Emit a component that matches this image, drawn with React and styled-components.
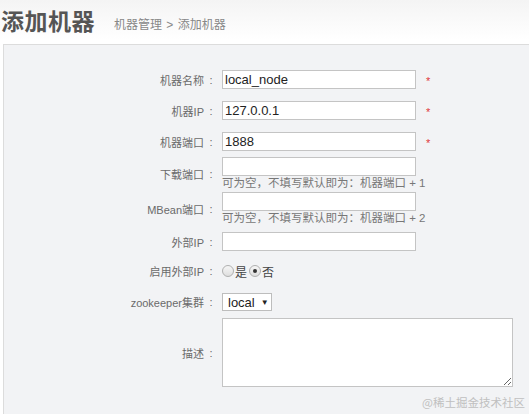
import React from "react";
import styled, { createGlobalStyle } from "styled-components";

const Global = createGlobalStyle`
  html, body { margin: 0; padding: 0; }
  body {
    background: linear-gradient(#f4f4f4 0px, #ffffff 40px);
    font-family: "Liberation Sans", Arial, "Noto Sans CJK SC", sans-serif;
    overflow: hidden;
    text-spacing-trim: space-all;
  }
`;

const Page = styled.div`
  position: relative;
  width: 529px;
  height: 414px;
  overflow: hidden;
`;

const Header = styled.div`
  display: flex;
  align-items: flex-end;
  height: 44px;
  padding-left: 1px;
  padding-bottom: 9px;
  box-sizing: border-box;
`;

const Title = styled.h1`
  margin: 0;
  font-size: 23px;
  line-height: 30px;
  font-weight: bold;
  color: #555;
  font-family: "Noto Sans CJK SC", sans-serif;
  letter-spacing: 0.5px;
`;

const Crumb = styled.span`
  margin-left: 19px;
  margin-bottom: 2px;
  font-size: 12px;
  line-height: 16px;
  color: #888;
  font-family: "Liberation Sans", Arial, "Noto Sans CJK SC", sans-serif;
  word-spacing: 1px;
`;

const Panel = styled.div`
  margin-left: 3px;
  border: 1px solid #dcdcdc;
  border-right: none;
  background: #f2f3f5;
  height: 400px;
  padding-top: 24px;
  box-sizing: border-box;
`;

const Row = styled.div`
  display: flex;
  align-items: center;
  margin-top: ${(p) => p.$gap || 0}px;
`;

const Label = styled.div`
  width: 212px;
  flex: none;
  display: flex;
  justify-content: flex-end;
  align-items: center;
  font-size: 11px;
  color: #6a6a6a;
  font-family: "Liberation Sans", Arial, "Noto Sans CJK SC", sans-serif;
`;

const Colon = styled.span`
  display: inline-block;
  width: 10px;
  margin-left: 2px;
  text-align: center;
`;

const Field = styled.div`
  display: flex;
  flex-direction: column;
  margin-left: 6px;
`;

const Inline = styled.div`
  display: flex;
  align-items: center;
`;

const Input = styled.input`
  width: 194px;
  height: 19px;
  box-sizing: border-box;
  border: 1px solid #c4c4c4;
  background: #fff;
  padding: 0 2px;
  font-size: 13px;
  color: #222;
  font-family: "Liberation Sans", Arial, sans-serif;
  outline: none;
`;

const Star = styled.span`
  color: #e0383c;
  font-size: 11px;
  margin-left: 10px;
  margin-top: 2px;
`;

const Hint = styled.div`
  font-size: 11.5px;
  color: #777;
  line-height: 15px;
  height: 15px;
  white-space: nowrap;
  font-family: "Liberation Sans", Arial, "Noto Sans CJK SC", sans-serif;
`;

const Radios = styled.div`
  display: flex;
  align-items: center;
  font-size: 12px;
  color: #444;
  height: 16px;
  font-family: "Noto Sans CJK SC", sans-serif;
`;

const Radio = styled.span`
  width: 10px;
  height: 10px;
  border-radius: 50%;
  border: 1px solid #b0b0b0;
  background: linear-gradient(#f6f6f6, #dedede);
  display: inline-flex;
  align-items: center;
  justify-content: center;
  margin-left: ${(p) => (p.$first ? 0 : 2)}px;
  margin-right: 1px;
  &::after {
    content: "";
    width: 4px;
    height: 4px;
    border-radius: 50%;
    background: ${(p) => (p.$checked ? "#333" : "transparent")};
  }
`;

const Select = styled.div`
  width: 50px;
  height: 18px;
  box-sizing: border-box;
  border: 1px solid #bdbdbd;
  background: #fff;
  display: flex;
  align-items: center;
  padding-left: 5px;
  font-size: 13px;
  color: #222;
`;

const Caret = styled.span`
  font-size: 8px;
  margin-left: 6px;
`;

const TextArea = styled.textarea`
  width: 291px;
  height: 69px;
  box-sizing: border-box;
  border: 1px solid #c4c4c4;
  background: #fff;
  resize: both;
  outline: none;
  display: block;
`;

const Watermark = styled.div`
  position: absolute;
  right: 4px;
  bottom: 4px;
  font-size: 11.5px;
  color: #c0c0c0;
  font-family: "Noto Sans CJK SC", serif;
`;

function FieldLabel({ children }) {
  return (
    <Label>
      {children}
      <Colon>:</Colon>
    </Label>
  );
}

function TextRow({ label, value, star, hint, gap }) {
  return (
    <Row $gap={gap}>
      <FieldLabel>{label}</FieldLabel>
      <Field>
        <Inline>
          <Input defaultValue={value} />
          {star && <Star>*</Star>}
        </Inline>
        {hint && <Hint>{hint}</Hint>}
      </Field>
    </Row>
  );
}

export default function App() {
  return (
    <Page>
      <Global />
      <Header>
        <Title>添加机器</Title>
        <Crumb>机器管理 &gt; 添加机器</Crumb>
      </Header>
      <Panel>
        <TextRow label="机器名称" value="local_node" star gap={1} />
        <TextRow label="机器IP" value="127.0.0.1" star gap={12} />
        <TextRow label="机器端口" value="1888" star gap={12} />
        <TextRow label="下载端口" value="" hint="可为空，不填写默认即为：机器端口 + 1" gap={6} />
        <TextRow label="MBean端口" value="" hint="可为空，不填写默认即为：机器端口 + 2" gap={1} />
        <TextRow label="外部IP" value="" gap={6} />
        <Row $gap={12}>
          <FieldLabel>启用外部IP</FieldLabel>
          <Field>
            <Radios>
              <Radio $first />是<Radio $checked />否
            </Radios>
          </Field>
        </Row>
        <Row $gap={14}>
          <FieldLabel>zookeeper集群</FieldLabel>
          <Field>
            <Select>
              local<Caret>▼</Caret>
            </Select>
          </Field>
        </Row>
        <Row $gap={7}>
          <FieldLabel>描述</FieldLabel>
          <Field>
            <TextArea />
          </Field>
        </Row>
      </Panel>
      <Watermark>@稀土掘金技术社区</Watermark>
    </Page>
  );
}
